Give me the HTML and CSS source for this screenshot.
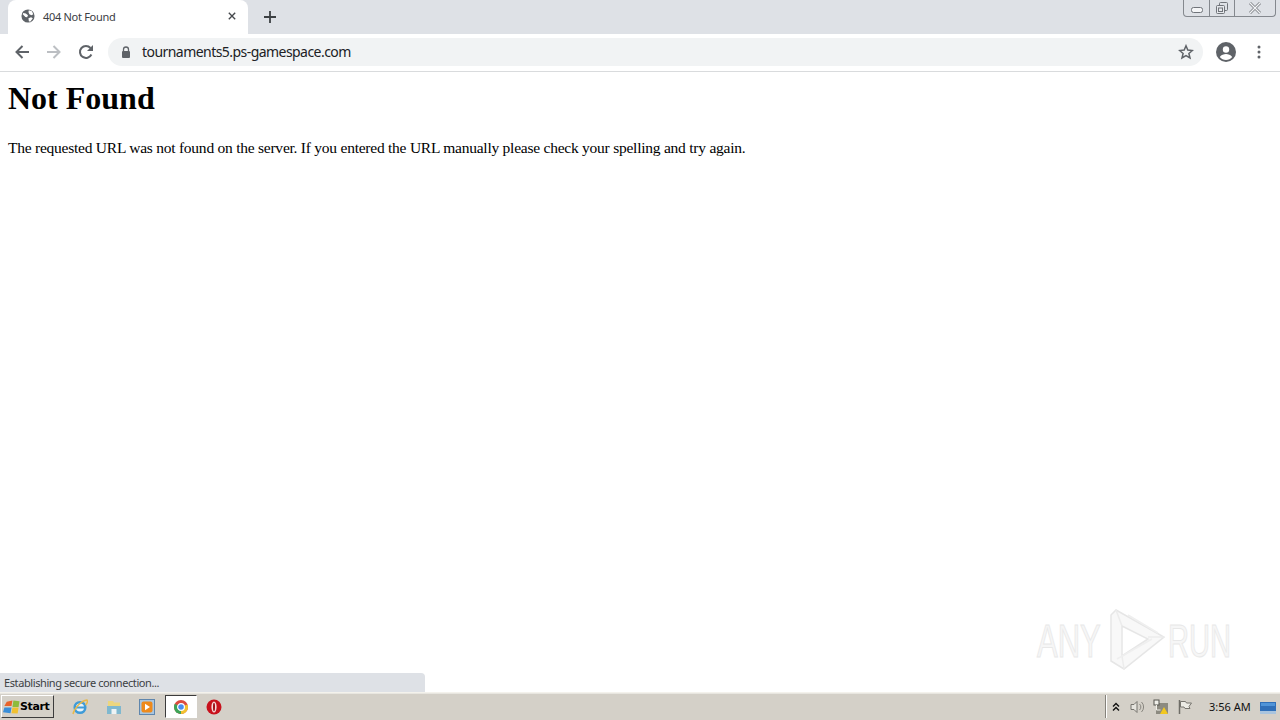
FILE: index.html
```html
<!DOCTYPE html>
<html lang="en">
<head>
<meta charset="utf-8">
<title>404 Not Found</title>
<link rel="stylesheet" href="styles.css">
</head>
<body>
<div class="browser">
  <header class="tabstrip">
    <div class="tab">
      <svg class="favicon" viewBox="0 0 16 16"><circle cx="8" cy="8" r="7.500" fill="#5f6368"/><path d="M2.500 4.500l3 .5 2.500 2-1 2.500-2-.5-3-3zM9 1.500l3.500 1 1.500 3.500-2 1-2.500-1-1-2.500zM8.500 10.500l3-1 2 1-3 4-1.500-.5z" fill="#fff"/></svg>
      <span class="tab-title">404 Not Found</span>
      <svg class="tab-close" viewBox="0 0 10 10"><path d="M1 1l8 8M9 1l-8 8" stroke="#45484c" stroke-width="1.700" fill="none"/></svg>
    </div>
    <svg class="new-tab" viewBox="0 0 12 12"><path d="M6 0v12M0 6h12" stroke="#3c4043" stroke-width="1.800" fill="none"/></svg>
    <div class="win-controls">
      <div class="win-btn win-min"><svg viewBox="0 0 14 8" width="14" height="8"><rect x="1.500" y="1.500" width="11" height="5" rx="2" fill="#f4f5f7" stroke="#70747a"/></svg></div>
      <div class="win-btn win-max"><svg viewBox="0 0 14 14" width="14" height="14"><rect x="4.500" y="1.500" width="8" height="8" rx="1" fill="none" stroke="#70747a"/><rect x="1.500" y="4.500" width="8" height="8" rx="1" fill="#e6e8ec" stroke="#70747a"/><rect x="3.500" y="7" width="4" height="3.500" fill="none" stroke="#70747a"/></svg></div>
      <div class="win-btn win-close"><svg viewBox="0 0 14 12" width="14" height="12"><path d="M2 1l10 10M12 1L2 11" stroke="#70747a" stroke-width="2.800" fill="none"/><path d="M2 1l10 10M12 1L2 11" stroke="#f4f5f7" stroke-width="1.400" fill="none"/></svg></div>
    </div>
  </header>

  <nav class="toolbar">
    <svg class="nav-icon icon-back" viewBox="0 0 16 16"><path d="M15 8H2.500M8.500 2l-6 6 6 6" stroke="#5f6368" stroke-width="2" fill="none"/></svg>
    <svg class="nav-icon icon-forward" viewBox="0 0 16 16"><path d="M1 8h12.500M7.500 2l6 6-6 6" stroke="#bcbfc3" stroke-width="2" fill="none"/></svg>
    <svg class="nav-icon icon-reload" viewBox="0 0 16 16"><path d="M13.400 10.500A6 6 0 1 1 12.500 4" stroke="#5f6368" stroke-width="2" fill="none"/><path d="M15 1v6H9z" fill="#5f6368"/></svg>
    <div class="omnibox">
      <svg class="lock" viewBox="0 0 10 12"><path d="M2.500 5V3.500a2.500 2.500 0 0 1 5 0V5" stroke="#5f6368" stroke-width="1.300" fill="none"/><rect x="1" y="5" width="8" height="7" rx="1" fill="#5f6368"/></svg>
      <span class="url">tournaments5.ps-gamespace.com</span>
      <svg class="star" viewBox="0 0 16 16"><path d="M8 1.800l1.800 4.300 4.600.4-3.500 3 1.100 4.500L8 11.600 4 14l1.100-4.500-3.500-3 4.600-.4z" stroke="#5f6368" stroke-width="1.500" fill="none"/></svg>
    </div>
    <svg class="avatar" viewBox="0 0 20 20"><circle cx="10" cy="10" r="10" fill="#5f6368"/><circle cx="10" cy="7.500" r="3.200" fill="#fff"/><path d="M3.800 15c1.500-2.300 4-3 6.200-3s4.700.7 6.200 3c-1.500 1.900-3.700 3-6.200 3s-4.700-1.100-6.200-3z" fill="#fff"/></svg>
    <svg class="menu" viewBox="0 0 4 14"><circle cx="2" cy="2" r="1.500" fill="#5f6368"/><circle cx="2" cy="7" r="1.500" fill="#5f6368"/><circle cx="2" cy="12" r="1.500" fill="#5f6368"/></svg>
  </nav>

  <main class="page">
    <h1>Not Found</h1>
    <p>The requested URL was not found on the server. If you entered the URL manually please check your spelling and try again.</p>
    <div class="watermark">
      <span class="wm-word wm-any">ANY</span>
      <svg class="wm-logo" viewBox="0 0 58 62"><path d="M8 1L56 28 16 60 3 52V6zM14 17V47L40 30z" fill="#f8f8f8" stroke="#e6e6e6" stroke-width="1.500"/><path d="M8 1l6 16M16 60l-2-13M56 28H40" fill="none" stroke="#ececec" stroke-width="1.500"/><path d="M20 6L50 24M9 50L44 30" fill="none" stroke="#efefef" stroke-width="1.500"/></svg>
      <span class="wm-word wm-run">RUN</span>
    </div>
    <div class="status">Establishing secure connection...</div>
  </main>

  <footer class="taskbar">
    <button class="start">
      <svg class="start-flag" viewBox="0 0 18 16"><path d="M4 2.500l6-1.500-1 6H1.500z" fill="#e8632a"/><path d="M11 1l6.500 1-1 6H10z" fill="#8dbb3c"/><path d="M1.500 8.500H9L8 14.500 0 13.500z" fill="#3a8ed8"/><path d="M10 8.500h6.500L15.500 15 9 14.500z" fill="#f0c030"/></svg>
      <span>Start</span>
    </button>
    <div class="quick">
      <svg class="tb-icon" viewBox="0 0 16 16"><circle cx="8" cy="8.500" r="5.300" fill="#e9f2f8" stroke="#3f9bd8" stroke-width="2.500"/><path d="M3.500 8.500h9" stroke="#3f9bd8" stroke-width="2"/><path d="M1 15C2 10 9 1.500 15 1c1 2-.5 4-1.500 5" stroke="#e8b84a" stroke-width="1.400" fill="none"/></svg>
      <svg class="tb-icon" viewBox="0 0 16 16"><path d="M2 2h5l1 1.500h6V8H2z" fill="#ecd67e"/><rect x="1" y="7" width="14" height="8" fill="#7fb8cf"/><rect x="5.500" y="10" width="5" height="5" fill="#eef3f4"/></svg>
      <svg class="tb-icon" viewBox="0 0 16 16"><rect x=".5" y=".5" width="15" height="15" fill="#a9c6e0" stroke="#5f86ad"/><rect x="2.500" y="2.500" width="11" height="11" rx="2" fill="#ee8a1c"/><path d="M6 4.800l5 3.200-5 3.200z" fill="#fff"/></svg>
      <div class="tb-active"><svg class="tb-icon" viewBox="0 0 16 16"><circle cx="8" cy="8" r="7" fill="#dd4b3e"/><path d="M8 8L14.500 5.500A7 7 0 0 1 8 15z" fill="#f2c230"/><path d="M8 8V15A7 7 0 0 1 1.800 4.800z" fill="#3da457"/><circle cx="8" cy="8" r="3.400" fill="#4a8df0" stroke="#fff" stroke-width="1.200"/></svg></div>
      <svg class="tb-icon" viewBox="0 0 16 16"><circle cx="8" cy="8" r="7.500" fill="#c8111c"/><ellipse cx="8" cy="8" rx="2.600" ry="5.500" fill="#f6dcdc"/><ellipse cx="8" cy="8" rx="1" ry="4.200" fill="#a00d16"/></svg>
    </div>
    <div class="tray">
      <svg class="tray-chev" viewBox="0 0 8 10"><path d="M1 4.500l3-3 3 3M1 8.500l3-3 3 3" stroke="#111" stroke-width="1.400" fill="none"/></svg>
      <svg class="tray-icon" viewBox="0 0 16 16"><path d="M2 5.500h3l3-3v11l-3-3H2z" fill="#e6e4de" stroke="#77756f"/><path d="M10.500 5a4 4 0 0 1 0 6M12.500 3a7 7 0 0 1 0 10" stroke="#88867f" fill="none"/></svg>
      <svg class="tray-icon" viewBox="0 0 16 16"><rect x="3" y="4" width="12" height="11" fill="#8c8a80"/><rect x="1" y="1" width="5" height="5" fill="#f0efe9" stroke="#55544e"/><path d="M3.500 6v5h4" stroke="#f0efe9" fill="none"/><path d="M11 8l4 7H7z" fill="#f2c81e"/></svg>
      <svg class="tray-icon" viewBox="0 0 16 16"><path d="M2.500 1v14" stroke="#6f6d67" stroke-width="1.500"/><path d="M3.500 2.500h5l1 1.500h5l-2.500 3.500 1 2H8l-1-1.500H3.500z" fill="#ecebe5" stroke="#77756f"/></svg>
      <span class="clock">3:56 AM</span>
      <svg class="show-desktop" viewBox="0 0 16 12"><rect width="16" height="12" fill="#2f6fb8"/><rect y="9" width="16" height="3" fill="#a9c4de"/><rect x="1" y="1" width="14" height="3" fill="#4f94d8"/></svg>
    </div>
  </footer>
</div>
</body>
</html>
```

FILE: styles.css
```css
* { box-sizing: border-box; }
html, body { margin: 0; height: 100%; overflow: hidden; }
body { background: #fff; font-family: "Liberation Serif", serif; color: #000; }
.browser { display: flex; flex-direction: column; width: 1280px; height: 720px; }

.tabstrip { position: relative; flex: 0 0 34px; display: flex; align-items: flex-end; padding-left: 8px; background: #dee1e6; }
.tab { display: flex; align-items: center; width: 240px; height: 34px; padding: 0 12px 2px 13px; background: #fff; border-radius: 8px 8px 0 0; }
.favicon { width: 14px; height: 14px; margin-right: 8px; }
.tab-title { flex: 1; font: 11px/1 "Noto Sans", "Open Sans", sans-serif; letter-spacing: -0.3px; color: #3c4043; }
.tab-close { width: 8px; height: 8px; }
.new-tab { width: 12px; height: 12px; margin: 0 0 11px 16px; }
.win-controls { position: absolute; top: 0; right: 4px; display: flex; height: 17px; border: 1px solid #84888e; border-top: 0; border-radius: 0 0 4px 4px; }
.win-btn { display: flex; align-items: center; justify-content: center; height: 16px; }
.win-btn + .win-btn { border-left: 1px solid #84888e; }
.win-min { width: 25px; padding-top: 3px; }
.win-max { width: 25px; }
.win-close { width: 41px; }

.toolbar { flex: 0 0 38px; display: flex; align-items: center; padding: 0 18px 1px 14px; background: #fff; border-bottom: 1px solid #d9dbdd; }
.nav-icon { width: 16px; height: 16px; }
.icon-forward { margin-left: 16px; }
.icon-reload { margin-left: 16px; }
.omnibox { display: flex; align-items: center; width: 1095px; height: 28px; margin-left: 14px; padding: 0 9px 0 13px; background: #f1f3f4; border-radius: 14px; }
.lock { width: 10px; height: 12px; margin-right: 11px; }
.url { flex: 1; font: 14px/1 "Noto Sans", "Open Sans", sans-serif; color: #202124; letter-spacing: -0.55px; }
.star { width: 16px; height: 16px; }
.avatar { width: 20px; height: 20px; margin-left: 13px; }
.menu { width: 4px; height: 14px; margin-left: 21px; }

.page { position: relative; flex: 1; min-height: 0; padding: 8px; }
.page h1 { margin: 0; font-size: 32px; line-height: 37px; font-weight: 700; }
.page p { margin: 22px 0 0; font-size: 15.5px; line-height: 18px; letter-spacing: -0.241px; }
.status { position: absolute; left: 0; bottom: 0; width: 425px; height: 19px; padding: 3px 4px 0; background: #dee1e6; border-top-right-radius: 4px; font: 11px/14px "Noto Sans", "Open Sans", sans-serif; letter-spacing: -0.4px; color: #3c4043; }
.watermark { position: absolute; top: 537px; left: 1037px; display: flex; align-items: center; width: 195px; height: 62px; font: 400 47px/1 "Liberation Sans", sans-serif; color: #f6f6f6; -webkit-text-stroke: 1px #e8e8e8; }
.wm-word { flex: none; width: 64px; white-space: nowrap; transform-origin: left center; }
.wm-any { transform: scaleX(0.66); }
.wm-run { transform: scaleX(0.62); }
.wm-logo { flex: none; width: 58px; height: 62px; margin: 0 2px 0 7px; }

.taskbar { flex: 0 0 28px; display: flex; align-items: center; background: #d4d0c8; border-top: 1px solid #f4f2ec; box-shadow: inset 0 1px 0 #e8e6e0; }
.start { display: flex; align-items: center; width: 53px; height: 23px; margin-left: 1px; padding: 0 0 0 1px; background: #d4d0c8; border: 1px solid; border-color: #fff #3c3c3c #3c3c3c #fff; font: 700 11px/1 "DejaVu Sans", sans-serif; letter-spacing: -0.4px; color: #000; }
.start-flag { width: 17px; height: 16px; }
.quick { display: flex; align-items: center; gap: 17.5px; margin-left: 18px; }
.tb-icon { display: block; width: 16px; height: 16px; }
.tb-active { display: flex; align-items: center; justify-content: center; width: 32px; height: 23px; margin: 0 -8px; background: #fff; border: 1px solid; border-color: #3c3c3c #fff #fff #3c3c3c; }
.tray { display: flex; align-items: center; height: 23px; margin-left: auto; padding-left: 6px; border-left: 1px solid #85827b; box-shadow: inset 1px 0 0 #fff; }
.tray-chev { width: 8px; height: 10px; margin-right: 9px; }
.tray-icon { width: 16px; height: 16px; margin-right: 8px; }
.clock { margin-left: 8px; width: 49px; font: 11px/1 "Noto Sans", "Open Sans", sans-serif; color: #111; }
.show-desktop { width: 16px; height: 12px; margin: 2px 4px 0 2px; }
```
